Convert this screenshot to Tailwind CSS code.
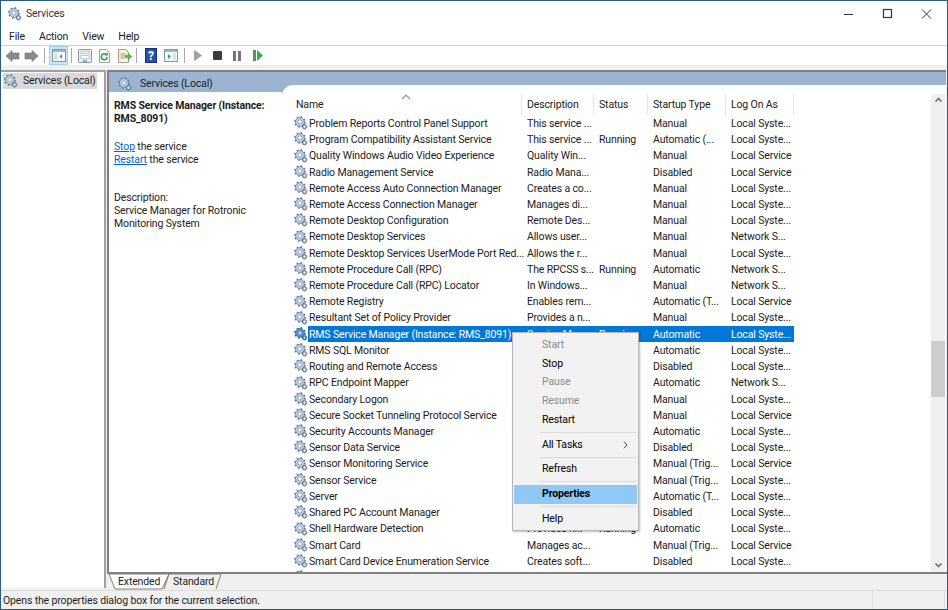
<!DOCTYPE html>
<html lang="en">
<head>
<meta charset="UTF-8">
<title>Services</title>
<script src="https://cdn.jsdelivr.net/npm/@tailwindcss/browser@4"></script>
</head>
<body class="bg-white">
<svg width="0" height="0" class="absolute">
  <symbol id="gear" viewBox="0 0 16 16">
    <circle cx="6.8" cy="6.8" r="5" fill="#c4d6e8" stroke="#6d8bab" stroke-width="1"/>
    <circle cx="6.8" cy="6.8" r="5.8" fill="none" stroke="#5f7f9f" stroke-width="1.8" stroke-dasharray="2 2.55"/>
    <circle cx="6.8" cy="6.8" r="2.4" fill="#fff" stroke="#7a96b3" stroke-width="1"/>
    <circle cx="12" cy="12.2" r="2.3" fill="#b8cbdd" stroke="#5f7488" stroke-width="1"/>
    <circle cx="12" cy="12.2" r="2.9" fill="none" stroke="#5f7488" stroke-width="1" stroke-dasharray="1 1.2"/>
    <circle cx="12" cy="12.2" r=".8" fill="#fff"/>
  </symbol>
  <symbol id="gear-selected" viewBox="0 0 16 16">
    <circle cx="6.8" cy="6.8" r="5" fill="#5f9bd6" stroke="#2f6cab" stroke-width="1"/>
    <circle cx="6.8" cy="6.8" r="5.8" fill="none" stroke="#2a679f" stroke-width="1.8" stroke-dasharray="2 2.55"/>
    <circle cx="6.8" cy="6.8" r="2.4" fill="#dcebf8" stroke="#2f6cab" stroke-width="1"/>
    <circle cx="12" cy="12.2" r="2.3" fill="#5f9bd6" stroke="#2a5f90" stroke-width="1"/>
    <circle cx="12" cy="12.2" r="2.9" fill="none" stroke="#2a5f90" stroke-width="1" stroke-dasharray="1 1.2"/>
    <circle cx="12" cy="12.2" r=".8" fill="#fff"/>
  </symbol>
</svg>

<div class="relative w-[948px] h-[610px] overflow-hidden border border-[#2b5d7d] flex flex-col text-[10.5px] tracking-[-0.14px] leading-none text-[#1c1c1c] font-['Roboto','Noto_Sans',sans-serif]">

  <!-- title bar -->
  <div class="h-[26px] flex items-center shrink-0">
    <svg class="w-[14px] h-[14px] ml-[7px]"><use href="#gear"/></svg>
    <span class="ml-[4px] text-[#333]">Services</span>
    <div class="ml-auto flex items-center">
      <svg class="w-[39px] h-[12px]" viewBox="0 0 39 12"><path d="M14 6.5h9" stroke="#333" stroke-width="1"/></svg>
      <svg class="w-[39px] h-[12px]" viewBox="0 0 39 12"><rect x="14.5" y="1.5" width="8" height="8" fill="none" stroke="#333" stroke-width="1.2"/></svg>
      <svg class="w-[39px] h-[12px]" viewBox="0 0 39 12"><path d="M14 1.5l9 9M23 1.500l-9 9" stroke="#333" stroke-width="1"/></svg>
    </div>
  </div>

  <!-- menu -->
  <div class="h-[19px] flex items-center gap-[14px] pl-[8px] pt-[2px] shrink-0 border-b border-[#cfcfcf]">
    <span>File</span><span>Action</span><span>View</span><span>Help</span>
  </div>

  <!-- toolbar -->
  <div class="h-[19px] flex items-center shrink-0 pl-[4px]">
    <svg class="w-[34px] h-[14px]" viewBox="0 0 34 14"><path d="M1 7l6-5.500V4h7v6H7v2.500z" fill="#8a8a8a" stroke="#6f6f6f" stroke-width=".6"/><path d="M33 7l-6-5.500V4h-7v6h7v2.500z" fill="#8a8a8a" stroke="#6f6f6f" stroke-width=".6"/></svg>
    <div class="w-px h-[15px] bg-[#a8a8a8] ml-[5px]"></div>
    <div class="w-[19px] h-[19px] ml-[4px] bg-[#cce4f7] border border-[#99d1ff] flex items-center justify-center">
      <svg class="w-[14px] h-[13px]" viewBox="0 0 14 13"><rect x=".5" y=".5" width="13" height="12" fill="#f6f9fc" stroke="#8496a8"/><rect x="1" y="1" width="12" height="2" fill="#9db6cf"/><rect x="2" y="4" width="4" height="7" fill="#d8e3ee"/><path d="M10 5v5L7.500 7.500z" fill="#3aa655"/></svg>
    </div>
    <div class="w-px h-[15px] bg-[#a8a8a8] ml-[3px]"></div>
    <svg class="w-[14px] h-[14px] ml-[6px]" viewBox="0 0 14 14"><rect x=".5" y=".5" width="13" height="13" rx="1" fill="#e9edf1" stroke="#8b96a1"/><rect x="3" y="2.500" width="8" height="7" fill="#fff" stroke="#a9b4bf" stroke-width=".7"/><path d="M4 4.500h6M4 6.500h6" stroke="#9aa7b4" stroke-width=".7"/><path d="M5 12h4" stroke="#3f9fe0" stroke-width="1.400"/></svg>
    <svg class="w-[13px] h-[14px] ml-[6px]" viewBox="0 0 13 14"><path d="M1.500.5h7l3 3v10h-10z" fill="#fafafa" stroke="#a4a4a4"/><path d="M9.300 8.200a3 3 0 1 1-.9-2.600" fill="none" stroke="#2f9e44" stroke-width="1.600"/><path d="M9.800 3.300v3.200H6.600z" fill="#2f9e44"/></svg>
    <svg class="w-[15px] h-[14px] ml-[6px]" viewBox="0 0 15 14"><path d="M1.500.5h7l3 3v10h-10z" fill="#f7f3dc" stroke="#a49f80"/><path d="M3.500 5h5M3.500 7h4M3.500 9h4" stroke="#8a8a70" stroke-width=".8"/><path d="M8 6.500h3V4l4 3.500-4 3.500V8.600H8z" fill="#58b947" stroke="#3c8f34" stroke-width=".4"/></svg>
    <div class="w-px h-[15px] bg-[#a8a8a8] ml-[4px]"></div>
    <div class="w-[12px] h-[15px] ml-[8px] bg-[#2a4fa8] border border-[#1a2f7a] text-white text-[12px] font-bold flex items-center justify-center">?</div>
    <svg class="w-[14px] h-[13px] ml-[7px]" viewBox="0 0 14 13"><rect x=".5" y=".5" width="13" height="12" fill="#f6f9fc" stroke="#8496a8"/><rect x="1" y="1" width="12" height="2" fill="#9db6cf"/><rect x="9" y="4" width="3" height="7" fill="#d8e3ee"/><path d="M4 5v5l3-2.500z" fill="#3aa655"/></svg>
    <div class="w-px h-[15px] bg-[#a8a8a8] ml-[6px]"></div>
    <svg class="w-[8px] h-[11px] ml-[9px]" viewBox="0 0 8 11"><path d="M.5.500l7 5-7 5z" fill="#a0a0a0" stroke="#8c8c8c" stroke-width=".6"/></svg>
    <div class="w-[9px] h-[9px] ml-[11px] bg-[#3c3c3c] rounded-[1px]"></div>
    <div class="w-[8px] h-[10px] ml-[11px] flex justify-between"><div class="w-[3px] bg-[#777]"></div><div class="w-[3px] bg-[#777]"></div></div>
    <svg class="w-[10px] h-[11px] ml-[12px]" viewBox="0 0 10 11"><rect width="3" height="11" fill="#5f8f5f"/><path d="M4 0l6 5.500-6 5.500z" fill="#2fb344"/></svg>
  </div>

  <!-- strip above the panes -->
  <div class="h-[5px] bg-[#f0f0f0] shrink-0"></div>

  <div class="flex-1 flex min-h-0 bg-[#f0f0f0]">
    <!-- tree -->
    <div class="w-[105px] shrink-0 bg-white border-t-2 border-r-2 border-[#a0a0a0] pl-[2px] pt-px mb-[2px]">
      <div class="w-[94px] h-[16px] bg-[#d9d9d9] flex items-center whitespace-nowrap">
        <svg class="w-[14px] h-[14px] ml-[1px] shrink-0"><use href="#gear"/></svg>
        <span class="ml-[5px]">Services (Local)</span>
      </div>
    </div>

    <!-- right pane -->
    <div class="flex-1 min-w-0 ml-px flex flex-col">
      <div class="flex-1 min-h-0 flex border-t-2 border-l-2 border-[#808080] bg-[#9ab4d2] mr-px">
        <!-- extended details -->
        <div class="w-[173px] shrink-0 flex flex-col">
          <div class="h-[20px] flex items-center shrink-0 pl-[9px] pt-[4px]">
            <svg class="w-[14px] h-[14px] shrink-0"><use href="#gear"/></svg>
            <span class="ml-[8px]">Services (Local)</span>
          </div>
          <div class="flex-1 bg-white pl-[5px] pt-[7px] leading-[13px]">
            <p class="font-bold w-[165px]">RMS Service Manager (Instance: RMS_8091)</p>
            <p class="mt-[15px]"><a class="text-[#0066cc] underline">Stop</a> the service</p>
            <p><a class="text-[#0066cc] underline">Restart</a> the service</p>
            <p class="mt-[25px]">Description:</p>
            <p class="w-[150px]">Service Manager for Rotronic Monitoring System</p>
          </div>
        </div>

        <!-- list -->
        <div class="flex-1 min-w-0 flex flex-col pt-[13px]">
          <div class="flex-1 min-h-0 bg-white rounded-tl-[11px] flex pt-[9px] overflow-hidden">
            <div class="flex-1 min-w-0 overflow-hidden">
              <div class="relative h-[21px] flex items-center pl-[14px] text-[#222]">
                <svg class="absolute left-[119px] top-0 w-[10px] h-[6px]" viewBox="0 0 10 6"><path d="M1 5l4-4 4 4" fill="none" stroke="#999" stroke-width="1.200"/></svg>
                <span class="w-[226px] shrink-0 h-full flex items-center pt-[2px] border-r border-[#e5e5e5]">Name</span>
                <span class="w-[72px] shrink-0 h-full flex items-center pt-[2px] pl-[5px] border-r border-[#e5e5e5]">Description</span>
                <span class="w-[54px] shrink-0 h-full flex items-center pt-[2px] pl-[5px] border-r border-[#e5e5e5]">Status</span>
                <span class="w-[78px] shrink-0 h-full flex items-center pt-[2px] pl-[5px] border-r border-[#e5e5e5]">Startup Type</span>
                <span class="w-[68px] shrink-0 h-full flex items-center pt-[2px] pl-[5px] border-r border-[#e5e5e5]">Log On As</span>
              </div>
              <div id="rows"></div>
            </div>
            <!-- scrollbar -->
            <div class="w-[14px] shrink-0 mr-px bg-[#f0f0f0] flex flex-col items-center">
              <svg class="w-[9px] h-[12px] shrink-0" viewBox="0 0 9 12"><path d="M1.500 7.500l3-3 3 3" fill="none" stroke="#606060" stroke-width="1.400"/></svg>
              <div class="w-full h-[56px] mt-[235px] bg-[#cdcdcd] shrink-0"></div>
              <svg class="w-[9px] h-[12px] mt-auto mb-px shrink-0" viewBox="0 0 9 12"><path d="M1.500 4.500l3 3 3-3" fill="none" stroke="#606060" stroke-width="1.400"/></svg>
            </div>
          </div>
        </div>
      </div>

      <!-- tabs -->
      <div class="h-[18px] shrink-0 border-t-2 border-[#808080] flex pl-[1px] relative">
        <div class="relative w-[61px] h-full flex items-center pl-[10px]">
          <svg class="absolute inset-0 w-[62px] h-[16px]" viewBox="0 0 62 16"><path d="M1 0l6 15h47L61 0z" fill="#fff" stroke="#808080" stroke-width="1"/></svg>
          <span class="relative">Extended</span>
        </div>
        <div class="relative w-[60px] h-full flex items-center pl-[5px] -ml-[1px]">
          <svg class="absolute inset-0 w-[60px] h-[16px] overflow-visible" viewBox="0 0 60 16"><path d="M-4 15L1 0h52l-5 15" fill="none" stroke="#808080" stroke-width="1"/></svg>
          <span class="relative">Standard</span>
        </div>
      </div>
    </div>
  </div>

  <!-- status bar -->
  <div class="h-[19px] shrink-0 bg-[#f0f0f0] border-t border-[#dcdcdc] flex items-center pl-[2px]">
    <span class="w-[870px] shrink-0 h-full flex items-center pt-[2px] border-r border-[#dcdcdc]">Opens the properties dialog box for the current selection.</span>
    <span class="w-[72px] shrink-0 h-full border-r border-[#dcdcdc]"></span>
  </div>

  <!-- context menu -->
  <div class="absolute left-[511px] top-[331px] w-[127px] h-[199px] bg-[#f2f2f2] border border-[#b5b5b5] shadow-[1px_1px_2px_rgba(0,0,0,0.25)] pt-[3px] px-px text-black">
    <div class="h-[19px] flex items-center pl-[28px] text-[#8a8a8a]">Start</div>
    <div class="h-[18px] flex items-center pl-[28px]">Stop</div>
    <div class="h-[19px] flex items-center pl-[28px] text-[#8a8a8a]">Pause</div>
    <div class="h-[19px] flex items-center pl-[28px] text-[#8a8a8a]">Resume</div>
    <div class="h-[19px] flex items-center pl-[28px]">Restart</div>
    <div class="h-px bg-[#dcdcdc] ml-[26px] mr-px my-[2px]"></div>
    <div class="h-[20px] flex items-center pl-[28px] pr-[9px] justify-between">All Tasks
      <svg class="w-[5px] h-[8px]" viewBox="0 0 5 8"><path d="M1 .8L4 4 1 7.200" fill="none" stroke="#444" stroke-width="1"/></svg>
    </div>
    <div class="h-px bg-[#dcdcdc] ml-[26px] mr-px my-[2px]"></div>
    <div class="h-[19px] flex items-center pl-[28px]">Refresh</div>
    <div class="h-px bg-[#dcdcdc] ml-[26px] mr-px mt-[2px] mb-[3px]"></div>
    <div class="h-[19px] flex items-center pl-[28px] bg-[#90c8f6] font-bold">Properties</div>
    <div class="h-px bg-[#dcdcdc] ml-[26px] mr-px my-[2px]"></div>
    <div class="h-[20px] flex items-center pl-[28px]">Help</div>
  </div>
</div>

<script>
  const services = [
    ["Problem Reports Control Panel Support", "This service ...", "", "Manual", "Local Syste..."],
    ["Program Compatibility Assistant Service", "This service ...", "Running", "Automatic (...", "Local Syste..."],
    ["Quality Windows Audio Video Experience", "Quality Win...", "", "Manual", "Local Service"],
    ["Radio Management Service", "Radio Mana...", "", "Disabled", "Local Service"],
    ["Remote Access Auto Connection Manager", "Creates a co...", "", "Manual", "Local Syste..."],
    ["Remote Access Connection Manager", "Manages di...", "", "Manual", "Local Syste..."],
    ["Remote Desktop Configuration", "Remote Des...", "", "Manual", "Local Syste..."],
    ["Remote Desktop Services", "Allows user...", "", "Manual", "Network S..."],
    ["Remote Desktop Services UserMode Port Red...", "Allows the r...", "", "Manual", "Local Syste..."],
    ["Remote Procedure Call (RPC)", "The RPCSS s...", "Running", "Automatic", "Network S..."],
    ["Remote Procedure Call (RPC) Locator", "In Windows...", "", "Manual", "Network S..."],
    ["Remote Registry", "Enables rem...", "", "Automatic (T...", "Local Service"],
    ["Resultant Set of Policy Provider", "Provides a n...", "", "Manual", "Local Syste..."],
    ["RMS Service Manager (Instance: RMS_8091)", "Service M...", "Running", "Automatic", "Local Syste..."],
    ["RMS SQL Monitor", "", "", "Automatic", "Local Syste..."],
    ["Routing and Remote Access", "", "", "Disabled", "Local Syste..."],
    ["RPC Endpoint Mapper", "", "", "Automatic", "Network S..."],
    ["Secondary Logon", "", "", "Manual", "Local Syste..."],
    ["Secure Socket Tunneling Protocol Service", "", "", "Manual", "Local Service"],
    ["Security Accounts Manager", "", "", "Automatic", "Local Syste..."],
    ["Sensor Data Service", "", "", "Disabled", "Local Syste..."],
    ["Sensor Monitoring Service", "", "", "Manual (Trig...", "Local Service"],
    ["Sensor Service", "", "", "Manual (Trig...", "Local Syste..."],
    ["Server", "", "", "Automatic (T...", "Local Syste..."],
    ["Shared PC Account Manager", "", "", "Disabled", "Local Syste..."],
    ["Shell Hardware Detection", "Provides n...", "Running", "Automatic", "Local Syste..."],
    ["Smart Card", "Manages ac...", "", "Manual (Trig...", "Local Service"],
    ["Smart Card Device Enumeration Service", "Creates soft...", "", "Disabled", "Local Syste..."],
    ["", "", "", "", ""],
  ];

  document.getElementById("rows").innerHTML = services.map((s) => {
    const selected = s[0].startsWith("RMS Service");
    const cells = selected ? "bg-[#0078d7] text-white" : "";
    const icon = selected ? "#gear-selected" : "#gear";
    return `<div class="h-[16.22px] flex items-center pl-[12px] whitespace-nowrap">
      <svg class="w-[14px] h-[14px] shrink-0"><use href="${icon}"/></svg>
      <div class="w-[486px] h-full flex items-center pt-[2px] shrink-0 ${cells}">
        <span class="w-[219px] shrink-0 pl-px">${s[0]}</span>
        <span class="w-[72px] shrink-0">${s[1]}</span>
        <span class="w-[54px] shrink-0">${s[2]}</span>
        <span class="w-[78px] shrink-0">${s[3]}</span>
        <span>${s[4]}</span>
      </div>
    </div>`;
  }).join("");
</script>
</body>
</html>
